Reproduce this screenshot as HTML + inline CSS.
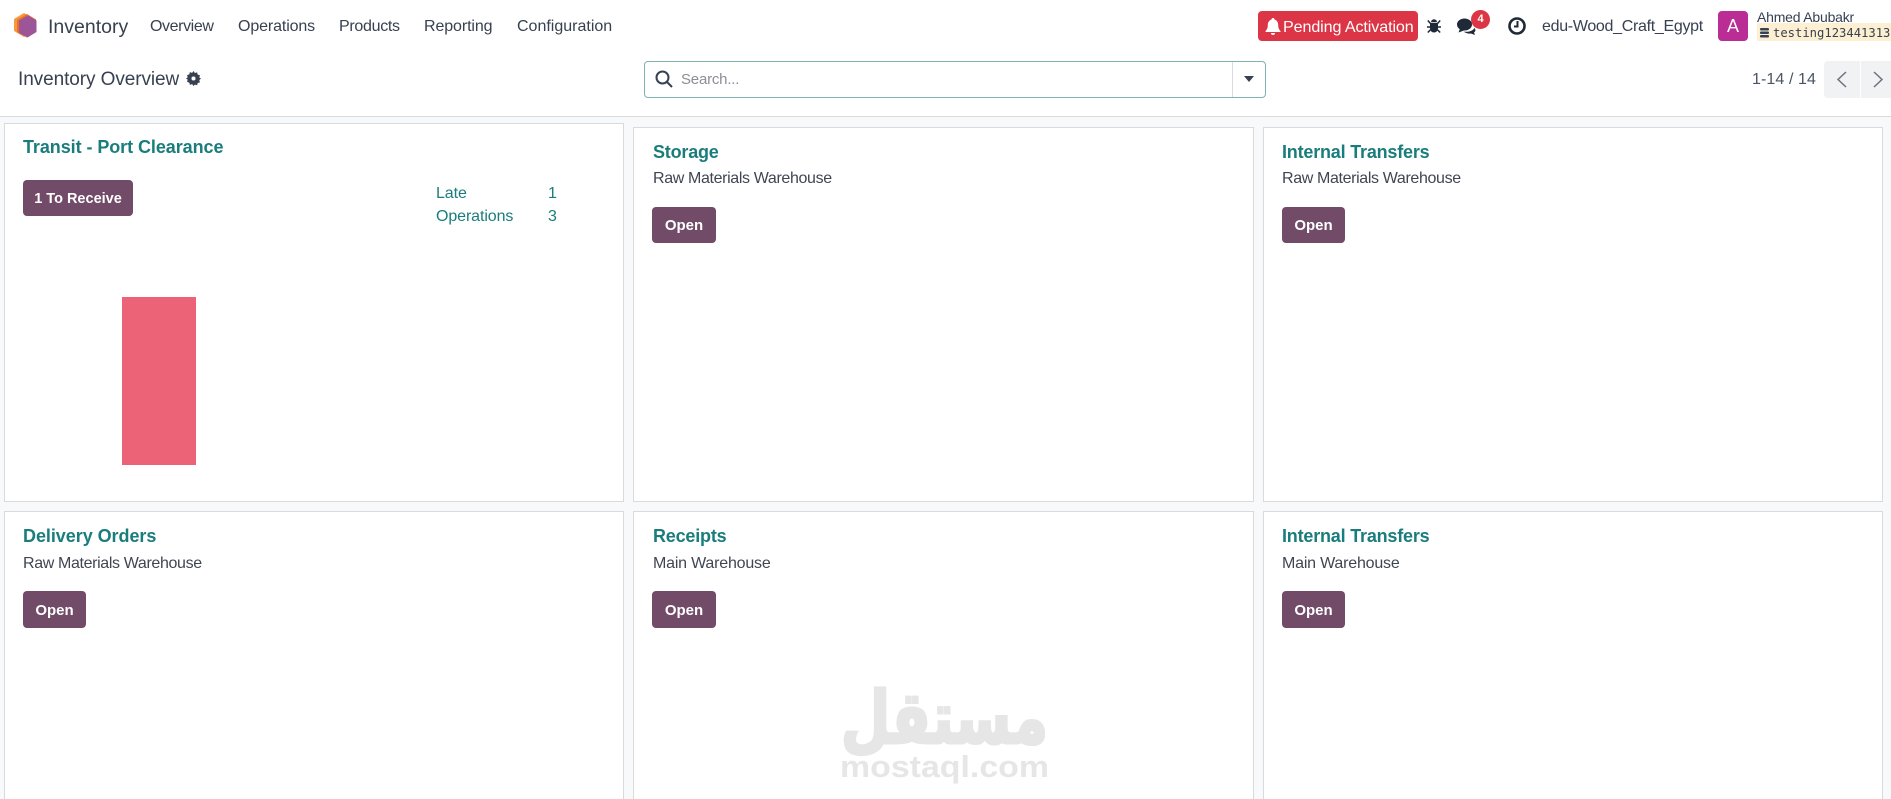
<!DOCTYPE html>
<html lang="en">
<head>
<meta charset="utf-8">
<title>Inventory Overview</title>
<style>
html,body{margin:0;padding:0;width:1891px;height:799px;overflow:hidden;background:#fff}
body{position:relative;font-family:"Liberation Sans",sans-serif;color:#374151}
.t{position:absolute;white-space:nowrap;line-height:24px;height:24px}
.b{position:absolute}
.nav{font-size:16px;top:15px;color:#374151}
.card{position:absolute;background:#fff;border:1px solid #d8dadd;box-sizing:border-box}
.title{font-size:18px;font-weight:bold;color:#1a7d7d;letter-spacing:-.2px}
.sub{font-size:16px;color:#3f4652;letter-spacing:-.36px}
.btn{position:absolute;background:#714b67;color:#fff;font-weight:bold;font-size:15px;border-radius:4px;text-align:center;box-sizing:border-box;padding-top:1px}
.teal{font-size:16px;color:#1a7d7d;letter-spacing:-.1px}
svg{position:absolute;overflow:visible}
</style>
</head>
<body>
<!-- content background -->
<div class="b" style="left:0;top:116px;width:1891px;height:683px;background:#f8f9fa;border-top:1px solid #d8dadd;box-sizing:border-box"></div>

<!-- top bar -->
<svg style="left:13px;top:13px" width="24" height="25" viewBox="0 0 24 25">
  <polygon points="11,0 21,6 21,18 11,24 1,18 1,6" fill="#f59a3b"/>
  <polygon points="14,1 23,6.500 23,19 14,24.500 4,19 4,7" fill="#ef6c2e"/>
  <polygon points="15,2.500 23.500,7.500 23.500,19 14.500,24.500 6,20 6,7.500" fill="#9c5596"/>
</svg>
<div class="t" style="left:48px;top:15px;font-size:19.500px;color:#374151">Inventory</div>
<div class="t nav" style="left:150px;letter-spacing:-.4px">Overview</div>
<div class="t nav" style="left:238px;letter-spacing:-.12px">Operations</div>
<div class="t nav" style="left:339px;letter-spacing:-.3px">Products</div>
<div class="t nav" style="left:424px;letter-spacing:-.1px">Reporting</div>
<div class="t nav" style="left:517px">Configuration</div>

<div class="b" style="left:1258px;top:11px;width:160px;height:30px;background:#dc3545;border-radius:4px"></div>
<svg style="left:1265px;top:18px" width="16" height="17" viewBox="0 0 16 17"><path d="M8 0a1.400 1.400 0 0 1 1.400 1.500C12 2.200 13.200 4.500 13.200 7c0 3.500 1 4.500 2.300 6.200.3.400 0 .800-.4.800H.9c-.4 0-.7-.4-.4-.8C1.800 11.500 2.800 10.500 2.800 7c0-2.500 1.200-4.800 3.800-5.500A1.400 1.400 0 0 1 8 0zM6 15h4a2 2 0 0 1-4 0z" fill="#fff"/></svg>
<div class="t" style="left:1283px;top:15px;font-size:16.100px;color:#fff;letter-spacing:-.1px">Pending Activation</div>

<svg style="left:1427px;top:18px" width="14" height="15" viewBox="0 0 14 15" fill="#1f2937" stroke="#1f2937"><path d="M3 5h8v5.500a4 4 0 0 1-8 0z" stroke="none"/><path d="M4 4.300a3 3 0 0 1 6 0z" stroke="none"/><path d="M.8 2.500L3.500 5.500M13.200 2.500L10.500 5.500M0 9h3.500M14 9h-3.500M.8 14.500l2.700-2.700M13.200 14.500l-2.700-2.700" stroke-width="1.500" fill="none"/></svg>
<svg style="left:1457px;top:18px" width="20" height="17" viewBox="0 0 20 17" fill="#1f2937"><ellipse cx="7.500" cy="6.500" rx="7.500" ry="6"/><path d="M1.500 14.500l1.500-4 4 2z"/><path d="M6.500 13.500c4 .8 9 0 11-3.500 1.500 2 1 3.500-.5 4.500l1 2.500-4-1.500c-2.500.5-5.500-.5-7.500-2z"/></svg>
<div class="b" style="left:1471px;top:10px;width:19px;height:19px;border-radius:50%;background:#dc3545;color:#fff;font-size:11px;font-weight:bold;text-align:center;line-height:19px">4</div>
<svg style="left:1508px;top:17px" width="18" height="18" viewBox="0 0 18 18" fill="none" stroke="#1f2937"><circle cx="9" cy="9" r="7.500" stroke-width="2.600"/><path d="M9.500 4v5.500H6" stroke-width="2"/></svg>
<div class="t" style="left:1542px;top:15px;font-size:16px;color:#374151;letter-spacing:-.3px">edu-Wood_Craft_Egypt</div>

<div class="b" style="left:1718px;top:11px;width:30px;height:30px;border-radius:4px;background:#b92d95;color:#fff;font-size:18px;text-align:center;line-height:30px">A</div>
<div class="t" style="left:1757px;top:5px;font-size:14px;color:#374151;letter-spacing:-.2px">Ahmed Abubakr</div>
<div class="b" style="left:1757px;top:23px;width:134px;height:18px;background:#fdf0d2;border-radius:2px 0 0 2px"></div>
<svg style="left:1760px;top:28px" width="9" height="10" viewBox="0 0 9 10" fill="#374151"><rect x="0" y="0" width="9" height="2.500" rx="1"/><rect x="0" y="3.500" width="9" height="2.500" rx="1"/><rect x="0" y="7" width="9" height="2.500" rx="1"/></svg>
<div class="t" style="left:1773px;top:21px;font-family:'DejaVu Sans Mono','Liberation Mono',monospace;font-size:12.200px;color:#374151">testing123441313</div>

<!-- control panel -->
<div class="t" style="left:18px;top:68px;font-size:19px;color:#374151;letter-spacing:-.08px">Inventory Overview</div>
<svg style="left:186px;top:71px" width="15" height="15" viewBox="0 0 14 14"><path d="M7 0l1.300 1.900 2.100-.6.500 2.100 2.100.6-.6 2.100L14 7l-1.600 1.500.6 2.100-2.100.6-.5 2.100-2.100-.6L7 14l-1.300-1.700-2.100.6-.5-2.100-2.100-.6.6-2.100L0 7l1.600-1.100-.6-2.100 2.100-.6.5-2.100 2.100.6z" fill="#374151"/><circle cx="7" cy="7" r="1.900" fill="#fff"/></svg>

<div class="b" style="left:644px;top:61px;width:622px;height:37px;border:1px solid #7fb2b2;border-radius:4px;box-sizing:border-box;background:#fff"></div>
<div class="b" style="left:1232px;top:62px;width:1px;height:35px;background:#d8dadd"></div>
<svg style="left:655px;top:70px" width="19" height="19" viewBox="0 0 19 19" fill="none" stroke="#374151" stroke-width="2"><circle cx="7.500" cy="7.500" r="6"/><path d="M12 12l5 5"/></svg>
<div class="t" style="left:681px;top:68px;font-size:15px;color:#8b8f96;letter-spacing:-.2px">Search...</div>
<svg style="left:1244px;top:76px" width="10" height="6" viewBox="0 0 10 6"><path d="M0 0h10L5 6z" fill="#374151"/></svg>

<div class="t" style="left:1752px;top:68px;font-size:16px;color:#4b5563;letter-spacing:.1px">1-14 / 14</div>
<div class="b" style="left:1824px;top:61px;width:36px;height:37px;background:#f1f2f3;border-radius:4px 0 0 4px"></div>
<div class="b" style="left:1861px;top:61px;width:30px;height:37px;background:#f1f2f3"></div>
<svg style="left:1836px;top:71px" width="11" height="17" viewBox="0 0 11 17" fill="none" stroke="#6b7280" stroke-width="1.500"><path d="M10 1L2 8.500 10 16"/></svg>
<svg style="left:1873px;top:71px" width="11" height="17" viewBox="0 0 11 17" fill="none" stroke="#6b7280" stroke-width="1.500"><path d="M1 1l8 7.500L1 16"/></svg>

<!-- row 1 -->
<div class="card" style="left:4px;top:123px;width:620px;height:379px"></div>
<div class="t title" style="left:23px;top:135px;letter-spacing:-.07px">Transit - Port Clearance</div>
<div class="btn" style="left:23px;top:180px;width:110px;height:36px;line-height:36px;font-size:14.500px">1 To Receive</div>
<div class="t teal" style="left:436px;top:182px">Late</div>
<div class="t teal" style="left:548px;top:182px">1</div>
<div class="t teal" style="left:436px;top:205px">Operations</div>
<div class="t teal" style="left:548px;top:205px">3</div>
<div class="b" style="left:122px;top:297px;width:74px;height:168px;background:#ec6276"></div>

<div class="card" style="left:633px;top:127px;width:621px;height:375px"></div>
<div class="t title" style="left:653px;top:140px">Storage</div>
<div class="t sub" style="left:653px;top:167px">Raw Materials Warehouse</div>
<div class="btn" style="left:652px;top:207px;width:64px;height:36px;line-height:36px">Open</div>

<div class="card" style="left:1263px;top:127px;width:620px;height:375px"></div>
<div class="t title" style="left:1282px;top:140px">Internal Transfers</div>
<div class="t sub" style="left:1282px;top:167px">Raw Materials Warehouse</div>
<div class="btn" style="left:1282px;top:207px;width:63px;height:36px;line-height:36px">Open</div>

<!-- row 2 -->
<div class="card" style="left:4px;top:511px;width:620px;height:300px"></div>
<div class="t title" style="left:23px;top:524px;letter-spacing:-.05px">Delivery Orders</div>
<div class="t sub" style="left:23px;top:552px">Raw Materials Warehouse</div>
<div class="btn" style="left:23px;top:591px;width:63px;height:37px;line-height:37px">Open</div>

<div class="card" style="left:633px;top:511px;width:621px;height:300px"></div>
<div class="t title" style="left:653px;top:524px">Receipts</div>
<div class="t sub" style="left:653px;top:552px;letter-spacing:-.2px">Main Warehouse</div>
<div class="btn" style="left:652px;top:591px;width:64px;height:37px;line-height:37px">Open</div>

<div class="card" style="left:1263px;top:511px;width:620px;height:300px"></div>
<div class="t title" style="left:1282px;top:524px">Internal Transfers</div>
<div class="t sub" style="left:1282px;top:552px;letter-spacing:-.2px">Main Warehouse</div>
<div class="btn" style="left:1282px;top:591px;width:63px;height:37px;line-height:37px">Open</div>

<!-- watermark -->
<svg style="left:841px;top:687px" width="207" height="100" viewBox="0 0 207 100">
  <text transform="translate(0,-8.700) scale(1,1.245)" x="103.500" y="52" text-anchor="middle" textLength="207" lengthAdjust="spacingAndGlyphs" font-family="'DejaVu Sans',sans-serif" font-weight="bold" font-size="58" fill="#e6e6e6" stroke="#e6e6e6" stroke-width="2.500" direction="rtl">مستقل</text>
  <text x="-1" y="90" textLength="209" lengthAdjust="spacingAndGlyphs" font-family="'Liberation Sans',sans-serif" font-weight="bold" font-size="31" fill="#e6e6e6">mostaql.com</text>
</svg>
</body>
</html>
